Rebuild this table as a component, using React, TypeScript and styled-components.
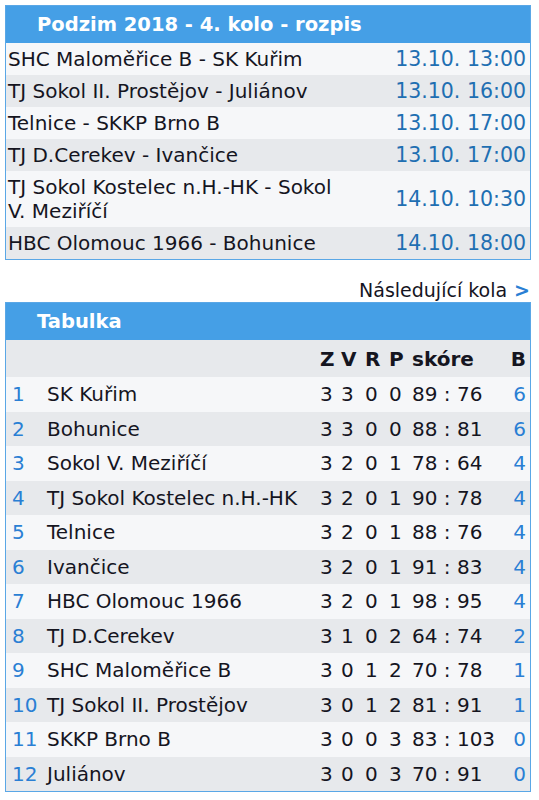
import styled, { createGlobalStyle } from 'styled-components'

const GlobalStyle = createGlobalStyle`
   html, body {
      margin: 0;
      padding: 0;
      background: #fff;
   }
   body {
      font-family: 'DejaVu Sans', 'Liberation Sans', sans-serif;
      color: #15151f;
   }
`

const Page = styled.div`
   width: 539px;
   padding: 5px 8px 0 5px;
   box-sizing: border-box;
   display: flex;
   flex-direction: column;
`

const Panel = styled.div`
   border: 1px solid #5aa7e6;
   display: flex;
   flex-direction: column;
`

const PanelTitle = styled.div`
   height: 37px;
   background: #459fe6;
   color: #fff;
   font-weight: bold;
   font-size: 19.5px;
   padding-left: 31px;
   display: flex;
   align-items: center;
`

const MatchRow = styled.div<{ $alt: boolean }>`
   display: grid;
   grid-template-columns: 1fr auto;
   align-items: center;
   padding: 4px 4px 4px 2px;
   background: ${(p) => (p.$alt ? '#e7e9ec' : '#f6f7f9')};
   font-size: 20px;
   line-height: 24px;
`

const Teams = styled.div`
   padding-right: 48px;
`

const MatchDate = styled.div`
   color: #1f6fb2;
   font-size: 20.5px;
   white-space: nowrap;
`

const NextLink = styled.div`
   display: flex;
   justify-content: flex-end;
   align-items: flex-end;
   gap: 7px;
   height: 42px;
   padding-bottom: 1px;
   box-sizing: border-box;
   font-size: 19px;
   padding-right: 1px;
`

const Arrow = styled.span`
   color: #2a7fd4;
   font-weight: bold;
`

const Row = styled.div<{ $alt: boolean; $head?: boolean }>`
   display: grid;
   grid-template-columns: 35px 1fr 21px 24px 24px 23px 99px 15px;
   align-items: center;
   height: ${(p) => (p.$head ? '37px' : '34.5px')};
   padding: 0 4px 0 6px;
   background: ${(p) => (p.$alt ? '#e7e9ec' : '#f6f7f9')};
   font-size: 20px;
   font-weight: ${(p) => (p.$head ? 'bold' : 'normal')};
   white-space: nowrap;

   & > :last-child {
      justify-self: end;
   }
`

const Rank = styled.span`
   color: #2a7fd4;
`

const Points = styled.span`
   color: #2a7fd4;
`

const Cell = styled.span``

const matches = [
   ['SHC Maloměřice B - SK Kuřim', '13.10. 13:00'],
   ['TJ Sokol II. Prostějov - Juliánov', '13.10. 16:00'],
   ['Telnice - SKKP Brno B', '13.10. 17:00'],
   ['TJ D.Cerekev - Ivančice', '13.10. 17:00'],
   ['TJ Sokol Kostelec n.H.-HK - Sokol V. Meziříčí', '14.10. 10:30'],
   ['HBC Olomouc 1966 - Bohunice', '14.10. 18:00'],
]

const standings: [string, number, number, number, number, string, number][] = [
   ['SK Kuřim', 3, 3, 0, 0, '89 : 76', 6],
   ['Bohunice', 3, 3, 0, 0, '88 : 81', 6],
   ['Sokol V. Meziříčí', 3, 2, 0, 1, '78 : 64', 4],
   ['TJ Sokol Kostelec n.H.-HK', 3, 2, 0, 1, '90 : 78', 4],
   ['Telnice', 3, 2, 0, 1, '88 : 76', 4],
   ['Ivančice', 3, 2, 0, 1, '91 : 83', 4],
   ['HBC Olomouc 1966', 3, 2, 0, 1, '98 : 95', 4],
   ['TJ D.Cerekev', 3, 1, 0, 2, '64 : 74', 2],
   ['SHC Maloměřice B', 3, 0, 1, 2, '70 : 78', 1],
   ['TJ Sokol II. Prostějov', 3, 0, 1, 2, '81 : 91', 1],
   ['SKKP Brno B', 3, 0, 0, 3, '83 : 103', 0],
   ['Juliánov', 3, 0, 0, 3, '70 : 91', 0],
]

const App = () => {
   return (
      <Page>
         <GlobalStyle />
         <Panel>
            <PanelTitle>Podzim 2018 - 4. kolo - rozpis</PanelTitle>
            {matches.map(([teams, date], i) => (
               <MatchRow key={i} $alt={i % 2 === 1}>
                  <Teams>{teams}</Teams>
                  <MatchDate>{date}</MatchDate>
               </MatchRow>
            ))}
         </Panel>

         <NextLink>
            Následující kola <Arrow>&gt;</Arrow>
         </NextLink>

         <Panel>
            <PanelTitle>Tabulka</PanelTitle>
            <Row $alt $head>
               <Cell />
               <Cell />
               <Cell>Z</Cell>
               <Cell>V</Cell>
               <Cell>R</Cell>
               <Cell>P</Cell>
               <Cell>skóre</Cell>
               <Cell>B</Cell>
            </Row>
            {standings.map(([team, z, v, r, p, score, b], i) => (
               <Row key={team} $alt={i % 2 === 1}>
                  <Rank>{i + 1}</Rank>
                  <Cell>{team}</Cell>
                  <Cell>{z}</Cell>
                  <Cell>{v}</Cell>
                  <Cell>{r}</Cell>
                  <Cell>{p}</Cell>
                  <Cell>{score}</Cell>
                  <Points>{b}</Points>
               </Row>
            ))}
         </Panel>
      </Page>
   )
}

export default App
